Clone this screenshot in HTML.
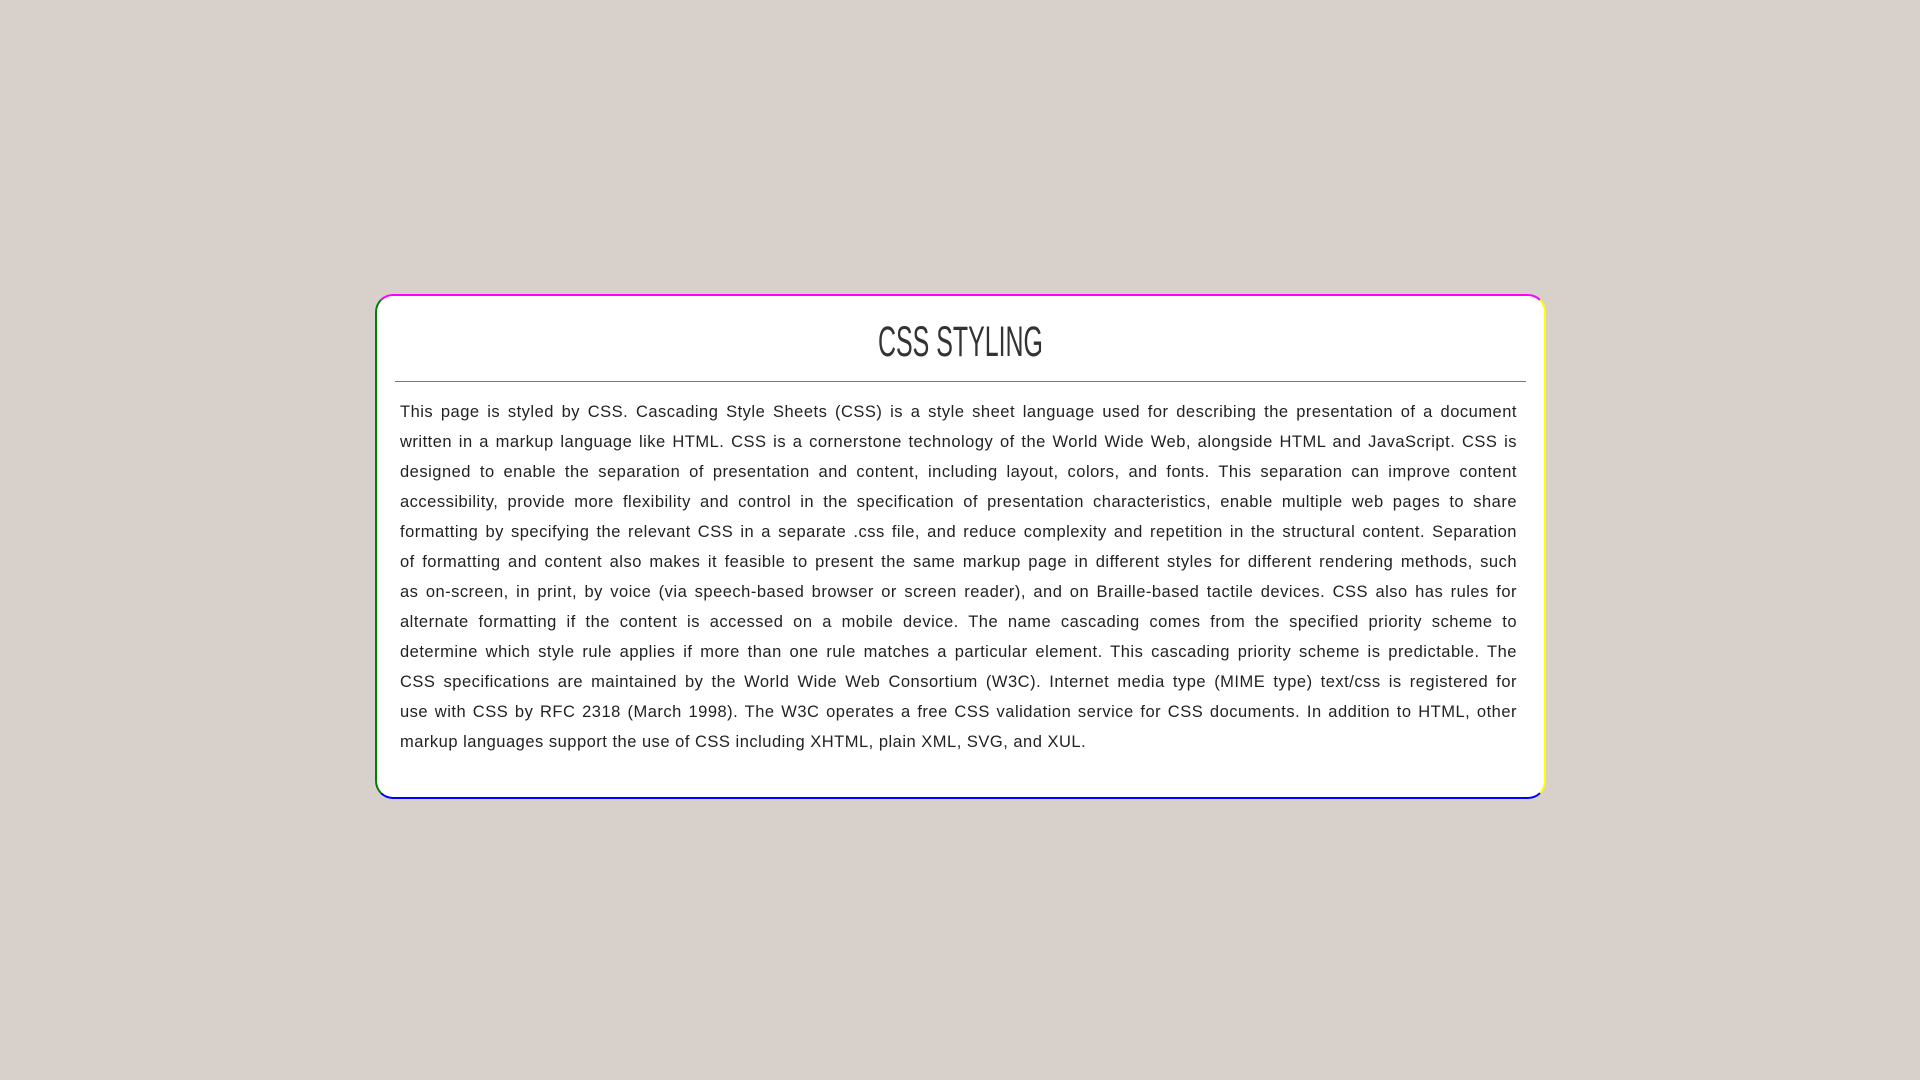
<!DOCTYPE html>
<html><head><style>
html,body{margin:0;padding:0;}
body{width:1920px;height:1080px;background:#d8d0ca;position:relative;overflow:hidden;}
.box{position:absolute;left:375px;top:294px;width:1167px;height:501px;background:#fff;
border-style:solid;border-width:2.5px;border-color:#ff00ff #ffff00 #0000ff #008000;border-radius:18px;}
h1{margin:0;position:absolute;left:0;right:0;top:22px;text-align:center;font-family:"Liberation Sans Narrow","Liberation Sans",sans-serif;font-weight:normal;font-size:43px;color:#333;transform:scaleX(0.58);}
.hr{position:absolute;left:18px;right:18px;top:85px;height:1px;background:#777;}
.p{position:absolute;left:23px;width:1117px;top:101px;margin:0;font-family:"Liberation Sans",sans-serif;font-size:16.5px;letter-spacing:0.5px;line-height:30px;color:#222;}
.p span{display:block;text-align:justify;text-align-last:justify;white-space:nowrap;}
.p span.l{text-align-last:left;}
</style></head><body>
<div class="box">
<h1>CSS STYLING</h1>
<div class="hr"></div>
<div class="p">
<span>This page is styled by CSS. Cascading Style Sheets (CSS) is a style sheet language used for describing the presentation of a document</span>
<span>written in a markup language like HTML. CSS is a cornerstone technology of the World Wide Web, alongside HTML and JavaScript. CSS is</span>
<span>designed to enable the separation of presentation and content, including layout, colors, and fonts. This separation can improve content</span>
<span>accessibility, provide more flexibility and control in the specification of presentation characteristics, enable multiple web pages to share</span>
<span>formatting by specifying the relevant CSS in a separate .css file, and reduce complexity and repetition in the structural content. Separation</span>
<span>of formatting and content also makes it feasible to present the same markup page in different styles for different rendering methods, such</span>
<span>as on-screen, in print, by voice (via speech-based browser or screen reader), and on Braille-based tactile devices. CSS also has rules for</span>
<span>alternate formatting if the content is accessed on a mobile device. The name cascading comes from the specified priority scheme to</span>
<span>determine which style rule applies if more than one rule matches a particular element. This cascading priority scheme is predictable. The</span>
<span>CSS specifications are maintained by the World Wide Web Consortium (W3C). Internet media type (MIME type) text/css is registered for</span>
<span>use with CSS by RFC 2318 (March 1998). The W3C operates a free CSS validation service for CSS documents. In addition to HTML, other</span>
<span class="l">markup languages support the use of CSS including XHTML, plain XML, SVG, and XUL.</span>
</div>
</div>
</body></html>
